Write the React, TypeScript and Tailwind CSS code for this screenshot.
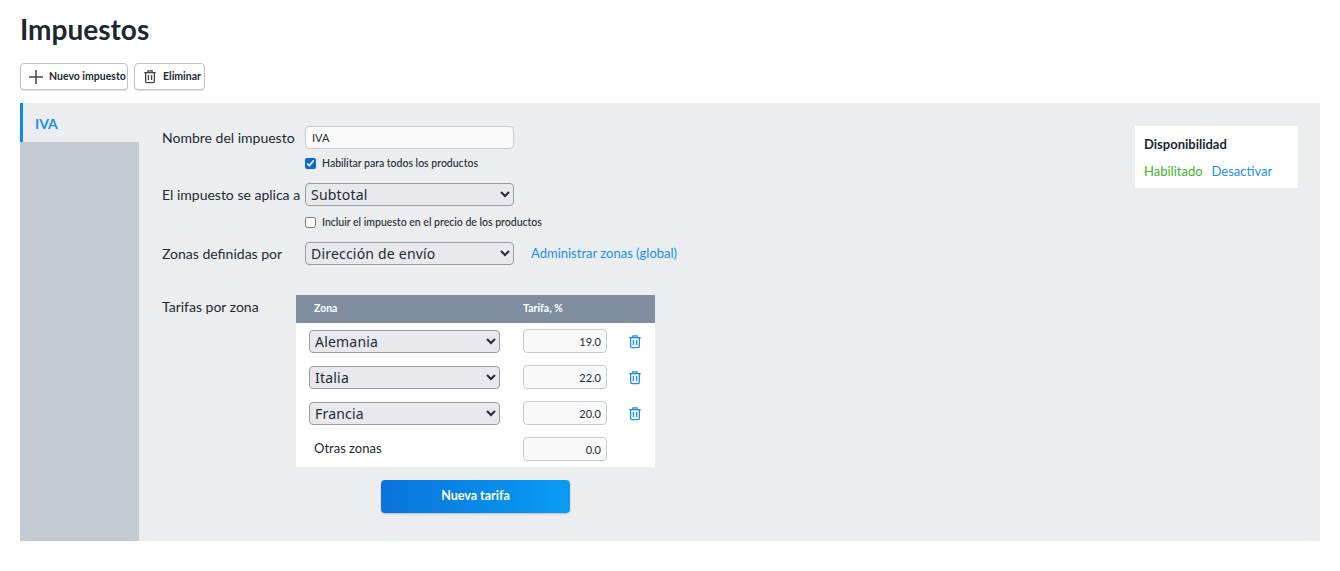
import React from "react";

const Trash = ({ className }: { className: string }) => (
  <svg viewBox="0 0 16 16" fill="none" stroke="currentColor" strokeWidth="1.5" className={className}>
    <path d="M1.5 3.6h13" />
    <path d="M5.6 3.4V1.6h4.8v1.8" />
    <path d="M3 3.6v9.9c0 .9.6 1.5 1.5 1.5h7c.9 0 1.5-.6 1.5-1.5V3.6" />
    <path d="M6.2 6.4v5.6M9.8 6.4v5.6" />
  </svg>
);

const Chevron = () => (
  <svg viewBox="0 0 10 6" className="w-[9px] h-[6px] ml-auto shrink-0" fill="none" stroke="#333" strokeWidth="1.5">
    <path d="M1 1l4 4 4-4" />
  </svg>
);

const Select = ({ value, w }: { value: string; w: string }) => (
  <select
    defaultValue={value}
    className={`${w} h-[23px] rounded-[4px] border border-[#9b9ba3] bg-[#e9e9ed] pl-[1px] text-[14px] text-[#222b33] [font-family:'Noto_Sans',sans-serif] tracking-[0.2px]`}
  >
    <option>{value}</option>
  </select>
);

const Rate = ({ value }: { value: string }) => (
  <input
    readOnly
    value={value}
    className="w-[84px] h-[24px] rounded-[4px] border border-[#c4cbd3] bg-[#f9f9fa] px-[5px] text-right text-[11px] text-[#222b33] outline-none"
  />
);

const Row = ({ name }: { name: string }) => (
  <div className="flex h-[36px] items-center">
    <div className="w-[227px] pl-[13px]">
      <Select value={name} w="w-[191px]" />
    </div>
    <Rate value={name === "Alemania" ? "19.0" : name === "Italia" ? "22.0" : "20.0"} />
    <Trash className="ml-[21px] w-[14px] h-[15px] text-[#1a8fec]" />
  </div>
);

export default function App() {
  return (
    <div className="h-[571px] bg-white px-[20px] text-[#222b33] [font-family:Lato,'Liberation_Sans',sans-serif]">
      <h1 className="pt-[11px] h-[63px] text-[28px] leading-[36px] font-bold text-[#1c2732]">Impuestos</h1>
      <div className="flex h-[40px] gap-[6px]">
        <button className="flex items-center h-[27px] w-[108px] rounded-[4px] border border-[#bcc3cc] bg-white pl-[8px] text-[10.5px] font-bold text-[#222b33] shadow-[0_1px_1px_rgba(0,0,0,0.12)]">
          <svg viewBox="0 0 14 14" className="w-[14px] h-[14px] mr-[6px]" stroke="#444" strokeWidth="1.5">
            <path d="M7 0v14M0 7h14" />
          </svg>
          Nuevo impuesto
        </button>
        <button className="flex items-center h-[27px] w-[71px] rounded-[4px] border border-[#bcc3cc] bg-white pl-[8px] text-[10.5px] font-bold text-[#222b33] shadow-[0_1px_1px_rgba(0,0,0,0.12)]">
          <Trash className="w-[14px] h-[15px] mr-[6px] text-[#444]" />
          Eliminar
        </button>
      </div>
      <div className="flex h-[438px] bg-[#ecedef]">
        <aside className="w-[119px] bg-[#c4cbd3]">
          <div className="h-[39px] border-l-[3px] border-[#0a8df0] bg-[#ecedef] pl-[12px] pt-[12px] text-[14px] leading-[17px] font-bold text-[#1a8fec]">
            IVA
          </div>
        </aside>
        <main className="flex flex-1 pl-[23px] pr-[22px] pt-[23px]">
          <div className="flex-1 text-[14px]">
            <div className="flex">
              <div className="w-[143px] leading-[23px]">Nombre del impuesto</div>
              <div>
                <input
                  readOnly
                  value="IVA"
                  className="block w-[209px] h-[23px] rounded-[4px] border border-[#c4cbd3] bg-[#fafafb] px-[6px] text-[11px] outline-none"
                />
                <label className="mt-[7px] flex items-center text-[10.5px] leading-[14px] font-medium">
                  <input type="checkbox" defaultChecked className="m-0 mr-[6px] w-[11px] h-[11px] accent-[#0a68d8]" />
                  Habilitar para todos los productos
                </label>
              </div>
            </div>
            <div className="mt-[13px] flex">
              <div className="w-[143px] leading-[23px]">El impuesto se aplica a</div>
              <div>
                <Select value="Subtotal" w="w-[209px] block" />
                <label className="mt-[9px] flex items-center text-[10.5px] leading-[14px] font-medium">
                  <input type="checkbox" className="m-0 mr-[6px] w-[11px] h-[11px]" />
                  Incluir el impuesto en el precio de los productos
                </label>
              </div>
            </div>
            <div className="mt-[13px] flex items-center">
              <div className="w-[143px] leading-[23px]">Zonas definidas por</div>
              <Select value="Dirección de envío" w="w-[209px]" />
              <a className="ml-[17px] text-[13px] text-[#1a8fec]">Administrar zonas (global)</a>
            </div>
            <div className="mt-[30px] flex">
              <div className="w-[134px] leading-[23px] pt-[0px]">Tarifas por zona</div>
              <div className="w-[359px]">
                <div className="flex h-[28px] items-center bg-[#7f8fa0] text-[10.5px] font-bold text-white">
                  <div className="w-[227px] pl-[18px]">Zona</div>
                  <div>Tarifa, %</div>
                </div>
                <div className="bg-white">
                  <Row name="Alemania" />
                  <Row name="Italia" />
                  <Row name="Francia" />
                  <div className="flex h-[36px] items-center">
                    <div className="w-[227px] pl-[18px] text-[13px]">Otras zonas</div>
                    <Rate value="0.0" />
                  </div>
                </div>
                <div className="mt-[13px] flex justify-center">
                  <button className="h-[33px] w-[189px] rounded-[4px] bg-gradient-to-r from-[#0a74da] to-[#0a9cf5] text-[12.5px] font-bold text-white shadow-[0_1px_2px_rgba(0,0,0,0.2)]">
                    Nueva tarifa
                  </button>
                </div>
              </div>
            </div>
          </div>
          <div className="h-[62px] w-[163px] bg-white pl-[9px] pt-[9px]">
            <div className="text-[13px] leading-[18px] font-bold text-[#1c2732]">Disponibilidad</div>
            <div className="mt-[10px] flex gap-[9px] text-[13px] leading-[16px]">
              <span className="text-[#3fb51f]">Habilitado</span>
              <a className="text-[#1a8fec]">Desactivar</a>
            </div>
          </div>
        </main>
      </div>
    </div>
  );
}
